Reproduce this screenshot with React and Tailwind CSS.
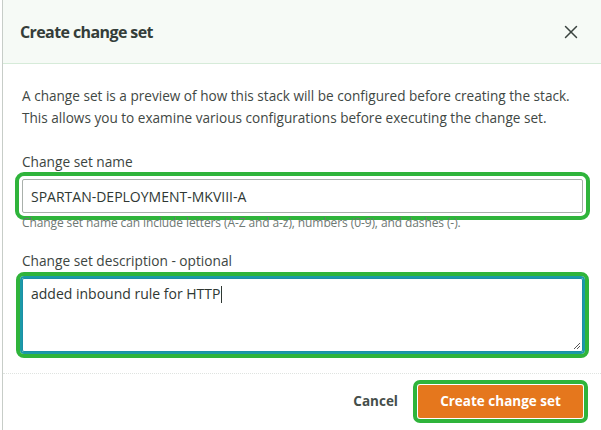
import { X } from "lucide-react";

const Field = ({ label, children, hint }) => (
  <div className="flex flex-col">
    <label className="text-[13.7px] leading-[20px] text-[#3c4541]">{label}</label>
    <div className="mt-[7px]">{children}</div>
    {hint ? (
      <p className="mt-[2px] text-[12px] leading-[16px] tracking-[-0.1px] text-[#6e7873]">{hint}</p>
    ) : null}
  </div>
);

const App = () => {
  return (
    <div className="w-[601px] h-[430px] bg-white pl-[2px] font-['Open_Sans',sans-serif]">
      <div className="h-full flex flex-col border-l border-[#c7cdc8]">
        <header className="shrink-0 h-[64px] flex items-center justify-between pl-[17px] pr-[18px] bg-[#f6faf6] border-b border-[#d6ebd9]">
          <h2 className="text-[16px] font-bold tracking-[-0.6px] text-[#343d39]">Create change set</h2>
          <button className="text-[#3a433f] mr-[1px]">
            <X size={22} strokeWidth={1.6} />
          </button>
        </header>

        <main className="shrink-0 flex flex-col pt-[21px] pl-[19px] pr-[18px] pb-[21px] border-b border-dotted border-[#dfe3e0]">
          <p className="text-[13.6px] leading-[22px] text-[#3f4844]">
            A change set is a preview of how this stack will be configured before creating the stack.
            <br />
            This allows you to examine various configurations before executing the change set.
          </p>

          <div className="mt-[23px]">
            <Field
              label="Change set name"
              hint="Change set name can include letters (A-Z and a-z), numbers (0-9), and dashes (-)."
            >
              <div className="h-[34px] flex items-center pl-[8px] border border-[#a9b0ab] rounded-[2px] outline-4 outline-solid outline-[#2fb43b] outline-offset-[3px] text-[14px] text-[#2f3833]">
                SPARTAN-DEPLOYMENT-MKVIII-A
              </div>
            </Field>
          </div>

          <div className="mt-[20px]">
            <Field label="Change set description - optional">
              <div className="relative h-[74px] pl-[8px] pt-[5px] border border-[#1b8fa6] shadow-[0_0_0_2px_#1b9aa8] outline-4 outline-solid outline-[#2fb43b] outline-offset-[2px] rounded-[2px] text-[14px] leading-[20px] text-[#2f3833]">
                added inbound rule for HTTP
                <span className="inline-block w-px h-[17px] bg-[#2f3833] align-middle ml-px -mt-[2px]"></span>
                <svg className="absolute right-[1px] bottom-[1px]" width="9" height="9" viewBox="0 0 9 9">
                  <path d="M8 2 L2 8 M8 5 L5 8" stroke="#555" strokeWidth="1" />
                </svg>
              </div>
            </Field>
          </div>
        </main>

        <footer className="flex-1 flex items-start justify-end pt-[11px] pr-[18px]">
          <button className="h-[33px] mr-[20px] text-[13.5px] font-bold text-[#454e4a]">Cancel</button>
          <button className="w-[165px] h-[33px] bg-[#e5771d] text-white text-[13.5px] font-bold rounded-[2px] outline-4 outline-solid outline-[#2fb43b] outline-offset-[1px]">
            Create change set
          </button>
        </footer>
      </div>
    </div>
  );
};

export default App;
